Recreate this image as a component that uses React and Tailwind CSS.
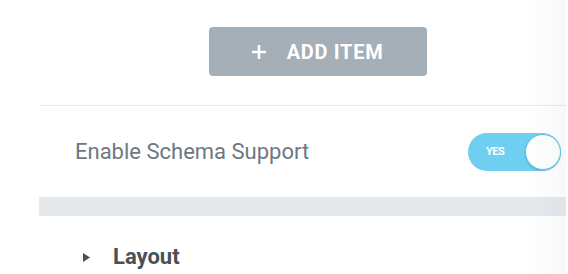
export default function App() {
  return (
    <div
      className="relative w-[568px] h-[274px] overflow-hidden bg-white"
      style={{ fontFamily: "Roboto, 'Liberation Sans', sans-serif" }}
    >
      <div className="ml-[39px] w-[527px] flex flex-col">
        {/* Add item button */}
        <div className="h-[105px] pt-[27px]">
          <button className="ml-[170px] w-[218px] h-[49px] rounded-[4px] bg-[#a4afb7] flex items-center justify-center gap-[20px] text-white">
            <svg width="16" height="16" viewBox="0 0 16 16" className="-ml-[2px]">
              <path d="M8 1v14M1 8h14" stroke="white" strokeWidth="2.6" />
            </svg>
            <span className="text-[20px] font-bold tracking-[0.7px] uppercase leading-none">Add Item</span>
          </button>
        </div>
        {/* Divider */}
        <div className="h-px bg-[#e6e9ec]" />
        {/* Schema toggle row */}
        <div className="h-[91px] flex items-center justify-between pl-[36px] pr-[5px]">
          <span className="text-[22px] leading-[26px] text-[#6d7882]">Enable Schema Support</span>
          <div className="relative w-[93px] h-[38px] rounded-full bg-[#6ecff0] flex items-center">
            <span className="ml-[18px] text-[11px] font-bold text-white tracking-[-0.5px] leading-none">YES</span>
            <div className="absolute right-0 top-px w-[36px] h-[36px] rounded-full bg-white border border-[#5ec4e6] shadow-[0_1px_2px_rgba(0,0,0,0.15)]" />
          </div>
        </div>
        {/* Grey band */}
        <div className="h-[19px] bg-[#e6e9ec]" />
        {/* Layout section */}
        <div className="h-[58px] flex items-center pl-[44px] pt-[24px]">
          <svg width="7" height="9" viewBox="0 0 7 9">
            <path d="M0 0L7 4.5L0 9Z" fill="#495157" />
          </svg>
          <span className="ml-[23px] text-[22px] font-bold text-[#495157] leading-none">Layout</span>
        </div>
      </div>
      <div className="absolute top-0 left-[528px] w-[38px] h-full bg-gradient-to-r from-transparent to-[rgba(120,130,150,0.06)]" />
    </div>
  );
}
